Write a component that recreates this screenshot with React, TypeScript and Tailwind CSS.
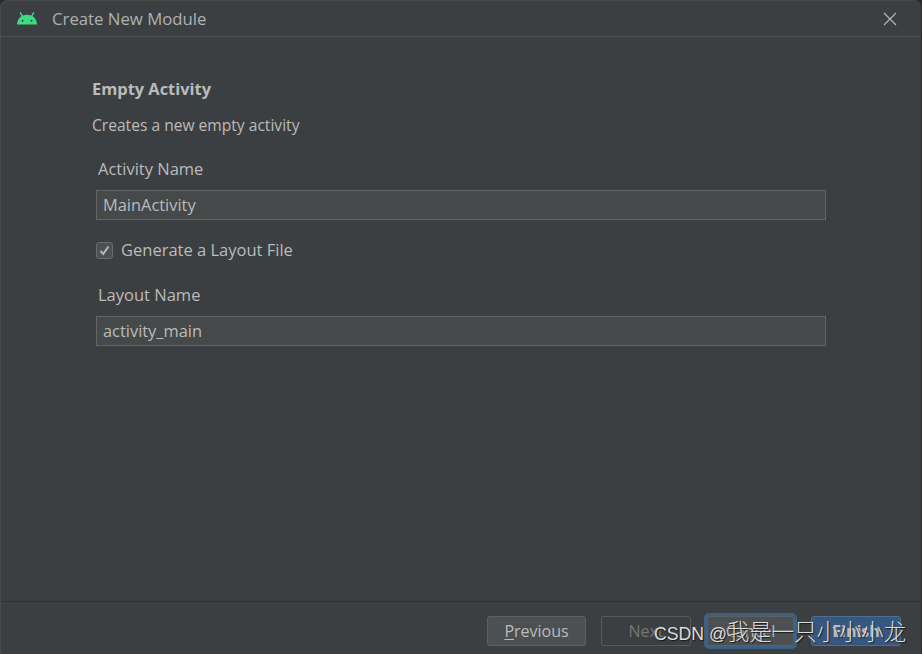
import { useState } from 'react';

function AndroidLogo() {
  return (
    <svg width="20" height="13" viewBox="0 0 20 13" className="block">
      <path d="M0 12.500C0.300 7 4 2.800 10 2.800s9.700 4.200 10 9.700Z" fill="#3ddc84" />
      <path d="M5.500 4.500 3.500 0.800M14.500 4.500l2-3.700" stroke="#3ddc84" strokeWidth="1.400" strokeLinecap="round" />
      <circle cx="5.500" cy="8.800" r="1" fill="#3c3f41" />
      <circle cx="14.500" cy="8.800" r="1" fill="#3c3f41" />
    </svg>
  );
}

function Field({ label, value, onChange }: { label: string; value: string; onChange: (v: string) => void }) {
  return (
    <div>
      <label className="block pl-[2px] text-[16.5px] leading-[22px] text-[#bbbbbb]">{label}</label>
      <input
        value={value}
        onChange={(e) => onChange(e.target.value)}
        className="mt-[10px] block h-[30px] w-[730px] border border-[#646464] bg-[#45494a] px-[6px] pb-[2px] text-[16.4px] text-[#bbbbbb] outline-none"
      />
    </div>
  );
}

export default function App() {
  const [activityName, setActivityName] = useState('MainActivity');
  const [layoutName, setLayoutName] = useState('activity_main');
  const [generate, setGenerate] = useState(true);

  return (
    <div className="relative h-[654px] w-[922px] overflow-hidden bg-[#2b2b2b] font-['Open_Sans','Noto_Sans_CJK_SC',sans-serif]">
      <div className="flex h-[654px] w-[921px] flex-col rounded-t-[8px] border-l border-t border-[#4a4a4a] bg-[#3c3f41]">
        {/* Title bar */}
        <div className="flex h-[36px] shrink-0 items-center border-b border-[#515151] pl-[16px] pr-[24px]">
          <AndroidLogo />
          <span className="ml-[15px] text-[16.75px] text-[#afb1b3]">Create New Module</span>
          <svg width="14" height="14" viewBox="0 0 14 14" className="ml-auto" fill="none" stroke="#b4b4b4" strokeWidth="1.200">
            <path d="M1 1l12 12M13 1 1 13" />
          </svg>
        </div>

        {/* Body */}
        <div className="flex-1 pl-[91px] pt-[40px]">
          <h1 className="text-[16.4px] font-bold leading-[24px] text-[#bbbbbb]">Empty Activity</h1>
          <p className="mt-[13px] text-[15.6px] leading-[22px] text-[#bbbbbb]">Creates a new empty activity</p>
          <div className="mt-[22px] pl-[4px]">
            <Field label="Activity Name" value={activityName} onChange={setActivityName} />
            <label className="mt-[19px] flex h-[22px] items-center">
              <input type="checkbox" checked={generate} onChange={(e) => setGenerate(e.target.checked)} className="peer sr-only" />
              <span className="flex h-[17px] w-[17px] items-center justify-center rounded-[3px] border border-[#6b6b6b] bg-[#4c5052]">
                {generate && (
                  <svg width="11" height="11" viewBox="0 0 11 11" fill="none" stroke="#b8b8b8" strokeWidth="2">
                    <path d="M1.500 6l2.700 3L9.500 1.500" />
                  </svg>
                )}
              </span>
              <span className="ml-[8px] text-[16.5px] text-[#bbbbbb]">Generate a Layout File</span>
            </label>
            <div className="mt-[23px]">
              <Field label="Layout Name" value={layoutName} onChange={setLayoutName} />
            </div>
          </div>
        </div>

        {/* Footer */}
        <div className="flex h-[53px] shrink-0 items-start border-t border-[#323232] pl-[486px] pt-[14px]">
          <button className="h-[30px] w-[99px] rounded-[3px] border border-[#5e6060] bg-[#4c5052] text-[16px] text-[#bbbbbb]">
            <span className="underline underline-offset-2">P</span>revious
          </button>
          <button disabled className="ml-[15px] h-[30px] w-[90px] rounded-[3px] border border-[#565a5c] text-[16px] text-[#777777]">
            Next
          </button>
          <button className="ml-[16px] h-[30px] w-[87px] rounded-[2px] border border-[#5e6060] bg-[#4c5052] text-[16px] text-[#bbbbbb] outline-[3px] outline-[#3d6185]">
            Cancel
          </button>
          <button className="ml-[17px] h-[30px] w-[90px] rounded-[3px] border border-[#4c708c] bg-[#365880] text-[16px] font-bold text-[#bbbbbb]">
            Finish
          </button>
        </div>
      </div>

      {/* CSDN watermark */}
      <div className="absolute left-[654px] top-[619px] flex items-baseline whitespace-nowrap font-['Liberation_Sans','Noto_Sans_CJK_SC',sans-serif] text-[#dcdcdc] [text-shadow:1px_1px_1px_#1a1a1a]">
        <span className="text-[17.7px] leading-[28px]">CSDN @</span>
        <span className="text-[22.4px] font-light leading-[28px]">我是一只小小小龙</span>
      </div>
    </div>
  );
}
